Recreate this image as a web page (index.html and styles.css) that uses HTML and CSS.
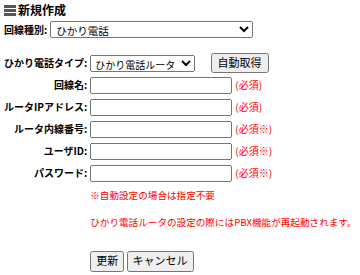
FILE: index.html
```html
<!DOCTYPE html>
<html lang="ja">
<head>
  <meta charset="UTF-8" />
  <title>新規作成</title>
  <link rel="stylesheet" href="styles.css">
</head>
<body>
  <h2 class="page-title">
    <svg class="title-icon" width="12" height="11" viewBox="0 0 12 11">
      <rect x="0" y="0" width="12" height="3" fill="#555"/>
      <rect x="0" y="4" width="12" height="3" fill="#555"/>
      <rect x="0" y="8" width="12" height="3" fill="#555"/>
    </svg>
    新規作成
  </h2>
  <div class="line-row">
    <label class="line-label" for="lineType">回線種別:</label>
    <select id="lineType" class="line-select">
      <option>ひかり電話</option>
    </select>
  </div>
  <table class="form-table">
    <tr class="type-row">
      <th>ひかり電話タイプ:</th>
      <td>
        <select class="type-select">
          <option>ひかり電話ルータ</option>
        </select>
        <button class="auto-btn">自動取得</button>
      </td>
    </tr>
    <tr>
      <th>回線名:</th>
      <td><input type="text" class="field"><span class="req">(必須)</span></td>
    </tr>
    <tr>
      <th>ルータIPアドレス:</th>
      <td><input type="text" class="field"><span class="req">(必須)</span></td>
    </tr>
    <tr>
      <th>ルータ内線番号:</th>
      <td><input type="text" class="field"><span class="req">(必須※)</span></td>
    </tr>
    <tr>
      <th>ユーザID:</th>
      <td><input type="text" class="field"><span class="req">(必須※)</span></td>
    </tr>
    <tr>
      <th>パスワード:</th>
      <td><input type="password" class="field"><span class="req">(必須※)</span></td>
    </tr>
    <tr>
      <th></th>
      <td class="notes">
        <p class="note">※自動設定の場合は指定不要</p>
        <p class="note note-warn">ひかり電話ルータの設定の際にはPBX機能が再起動されます。</p>
      </td>
    </tr>
    <tr>
      <th></th>
      <td class="actions">
        <button>更新</button>
        <button>キャンセル</button>
      </td>
    </tr>
  </table>
</body>
</html>
```

FILE: styles.css
```css
body {
  margin: 3px 4px;
  font-family: "Noto Sans CJK JP", sans-serif;
  font-size: 10px;
  line-height: 1.2;
  color: #000;
}
.page-title {
  display: flex;
  align-items: center;
  gap: 2px;
  margin: 0;
  height: 14px;
  font-size: 12px;
  font-weight: bold;
}
.line-row {
  display: flex;
  align-items: center;
  gap: 3px;
  margin-top: 4px;
}
.line-label {
  font-weight: bold;
}
select, input, button {
  font-family: "Noto Sans CJK JP", sans-serif;
  font-size: 11px;
  line-height: 1.2;
  margin: 0;
}
select {
  font-size: 10.5px;
}
.line-select {
  width: 203px;
  height: 17px;
  padding: 0 1px;
}
.form-table {
  border-collapse: collapse;
  margin-top: 14px;
}
.form-table th {
  width: 83px;
  padding: 0 3px 0 0;
  text-align: right;
  font-weight: bold;
  white-space: nowrap;
  height: 22px;
}
.form-table td {
  padding: 0;
  height: 22px;
  white-space: nowrap;
}
.type-select {
  width: 105px;
  height: 17px;
  padding: 0;
  font-size: 10px;
  vertical-align: middle;
}
.auto-btn {
  margin-left: 13px;
  height: 20px;
  padding: 0 5px;
  vertical-align: middle;
}
.field {
  width: 142px;
  height: 17px;
  box-sizing: border-box;
  padding: 0 2px;
  vertical-align: middle;
}
.req {
  color: #f00;
  margin-left: 3px;
  vertical-align: middle;
}
.notes {
  padding-top: 6px !important;
}
.note {
  margin: 0;
  color: #f00;
  font-size: 9.6px;
}
.note-warn {
  margin-top: 15px;
}
.actions {
  padding-top: 22px !important;
}
.actions button {
  height: 21px;
  padding: 0 4px;
}
```
